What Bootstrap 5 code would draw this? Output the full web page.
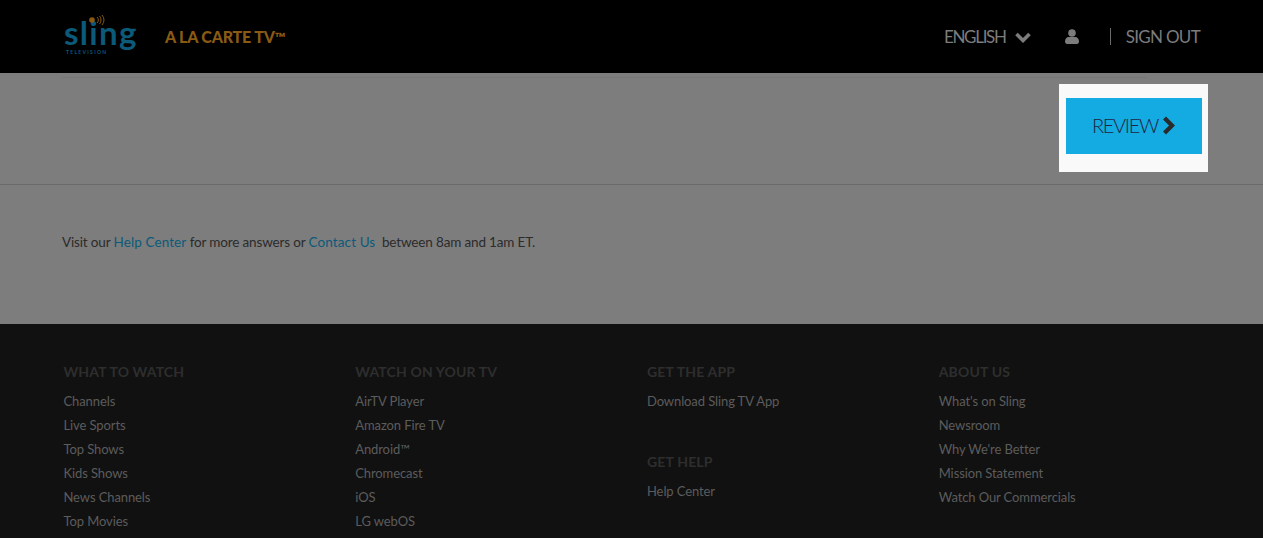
<!DOCTYPE html>
<html lang="en">
<head>
<meta charset="utf-8">
<title>Sling TV</title>
<link href="https://cdn.jsdelivr.net/npm/bootstrap@5.3.0/dist/css/bootstrap.min.css" rel="stylesheet">
<style>
html,body{height:538px;overflow:hidden;}
body{font-family:"Lato","Liberation Sans",sans-serif;background:#7d7d7d;}
.top-bar{height:73px;background:#000;padding-left:64px;padding-right:63px;}
.logo-box{width:73px;height:39px;margin-top:16px;flex:none;}
.logo-word{font-size:33px;line-height:32px;color:#0b5a7a;font-weight:700;letter-spacing:1.3px;}
.logo-sub{font-size:5px;line-height:5px;letter-spacing:1.3px;color:#0b5a7a;font-weight:700;margin-top:2px;padding-left:2px;width:54px;white-space:nowrap;overflow:hidden;}
.logo-dots{top:-1px;}
.tagline{margin-left:28px;font-size:16px;font-weight:900;color:#8a5a14;letter-spacing:-.2px;}
.tm-mark{font-size:14px;}
.top-link{font-size:17px;color:#7c7c7c;}
.lang-link{letter-spacing:-1.3px;}
.out-link{letter-spacing:-.7px;}
.sep{width:1px;height:17px;background:#6b6b6b;margin:0 15px 0 31px;}
.user-icon{margin-left:34px;}
.chev-icon{margin-left:9px;}
.action-bar{height:112px;border-bottom:1px solid #6a6a6a;padding-right:55px;padding-top:4px;}
.faint-rule{height:1px;background:#767676;margin:0 61px 0 62px;}
.review-row{padding-top:6px;}
.review-wrap{width:149px;height:88px;background:#f9f9f9;padding:14px 6px 18px 7px;}
.review-btn{width:136px;height:56px;border:0;border-radius:0;background:#14aae2;color:#1f2440;font-size:20px;font-weight:300;letter-spacing:-1.3px;padding:0 0 2px;gap:4px;}
.review-btn:hover{background:#14aae2;color:#1f2440;}
.help-area{height:139px;padding:47px 0 0 62px;font-size:13.500px;line-height:20px;letter-spacing:-.15px;color:#2b2b2b;}
.help-area a{color:#0b5a7a;text-decoration:none;letter-spacing:.1px;}
.site-foot{height:214px;background:#111;padding:38px 0 0 64px;overflow:hidden;}
.foot-grid{width:1167px;margin-left:-.5px;}
.foot-head{font-size:14px;line-height:20px;font-weight:700;color:#2e2e2e;margin:0 0 7px;letter-spacing:.15px;}
.foot-list{margin:0;padding:0;list-style:none;font-size:13px;line-height:24px;letter-spacing:-.1px;}
.foot-list a{color:#5c5c5c;text-decoration:none;}
.foot-gap{margin-top:39px;}
</style>
</head>
<body>
<header class="top-bar d-flex align-items-start">
  <div class="logo-box position-relative">
    <div class="logo-word">sling</div>
    <div class="logo-sub">TELEVISION</div>
    <svg class="logo-dots position-absolute start-0" width="73" height="10" viewBox="0 0 73 10" aria-hidden="true">
      <circle cx="28" cy="5" r="2.800" fill="#8a5a14"/>
      <path d="M33 2a4 4 0 0 1 0 6M35.500 1a6 6 0 0 1 0 8M38 0a8 8 0 0 1 0 10" fill="none" stroke="#8a5a14" stroke-width="1"/>
    </svg>
  </div>
  <div class="tagline align-self-center">A LA CARTE TV<span class="tm-mark">™</span></div>
  <nav class="ms-auto d-flex align-items-center h-100">
    <span class="top-link lang-link">ENGLISH</span>
    <svg class="chev-icon" width="16" height="12" viewBox="0 0 16 12" aria-hidden="true"><path d="M1.500 3l6.500 6.500L14.500 3" fill="none" stroke="#7c7c7c" stroke-width="3.600"/></svg>
    <svg class="user-icon" width="14" height="15" viewBox="0 0 14 15" aria-hidden="true"><circle cx="7" cy="4" r="3.800" fill="#7c7c7c"/><path d="M0 12.500C0 9.500 2 8 3.500 8h7C12 8 14 9.500 14 12.500c0 1.500-1 2.500-2 2.500H2c-1 0-2-1-2-2.500z" fill="#7c7c7c"/></svg>
    <span class="sep"></span>
    <span class="top-link out-link">SIGN OUT</span>
  </nav>
</header>
<section class="action-bar">
  <div class="faint-rule"></div>
  <div class="review-row d-flex justify-content-end">
    <div class="review-wrap">
      <button type="button" class="btn review-btn d-flex align-items-center justify-content-center">REVIEW
        <svg width="14" height="19" viewBox="0 0 14 19" aria-hidden="true"><path d="M2.500 2l7.500 7.500-7.500 7.500" fill="none" stroke="#2a2a2a" stroke-width="4.200"/></svg>
      </button>
    </div>
  </div>
</section>
<section class="help-area">Visit our <a href="#">Help Center</a> for more answers or <a href="#">Contact Us</a>&nbsp; between 8am and 1am ET.</section>
<footer class="site-foot">
  <div class="row g-0 foot-grid">
    <div class="col-3">
      <h6 class="foot-head">WHAT TO WATCH</h6>
      <ul class="foot-list">
        <li><a href="#">Channels</a></li><li><a href="#">Live Sports</a></li><li><a href="#">Top Shows</a></li><li><a href="#">Kids Shows</a></li><li><a href="#">News Channels</a></li><li><a href="#">Top Movies</a></li>
      </ul>
    </div>
    <div class="col-3">
      <h6 class="foot-head">WATCH ON YOUR TV</h6>
      <ul class="foot-list">
        <li><a href="#">AirTV Player</a></li><li><a href="#">Amazon Fire TV</a></li><li><a href="#">Android™</a></li><li><a href="#">Chromecast</a></li><li><a href="#">iOS</a></li><li><a href="#">LG webOS</a></li>
      </ul>
    </div>
    <div class="col-3">
      <h6 class="foot-head">GET THE APP</h6>
      <ul class="foot-list"><li><a href="#">Download Sling TV App</a></li></ul>
      <h6 class="foot-head foot-gap">GET HELP</h6>
      <ul class="foot-list"><li><a href="#">Help Center</a></li></ul>
    </div>
    <div class="col-3">
      <h6 class="foot-head">ABOUT US</h6>
      <ul class="foot-list">
        <li><a href="#">What's on Sling</a></li><li><a href="#">Newsroom</a></li><li><a href="#">Why We're Better</a></li><li><a href="#">Mission Statement</a></li><li><a href="#">Watch Our Commercials</a></li>
      </ul>
    </div>
  </div>
</footer>
<script src="https://cdn.jsdelivr.net/npm/bootstrap@5.3.0/dist/js/bootstrap.bundle.min.js"></script>
</body>
</html>
